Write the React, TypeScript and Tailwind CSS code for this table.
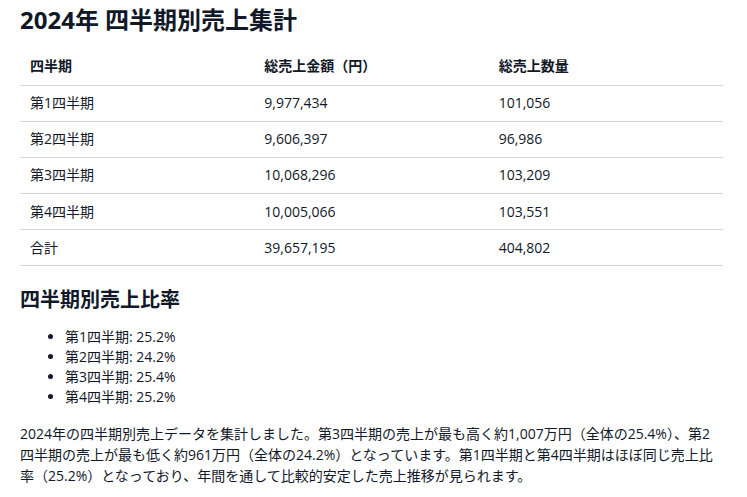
import React from "react";

const rows = [
  { q: "第1四半期", amount: "9,977,434", qty: "101,056" },
  { q: "第2四半期", amount: "9,606,397", qty: "96,986" },
  { q: "第3四半期", amount: "10,068,296", qty: "103,209" },
  { q: "第4四半期", amount: "10,005,066", qty: "103,551" },
  { q: "合計", amount: "39,657,195", qty: "404,802" },
];

const ratios = [
  { q: "第1四半期", pct: "25.2%" },
  { q: "第2四半期", pct: "24.2%" },
  { q: "第3四半期", pct: "25.4%" },
  { q: "第4四半期", pct: "25.2%" },
];

export default function App() {
  return (
    <div
      className="min-h-screen bg-white pl-5 pr-6 text-[#111827]"
      style={{ fontFamily: '"Open Sans", "Noto Sans CJK JP", sans-serif' }}
    >
      <h1 className="pt-1 text-2xl font-bold leading-8">2024年 四半期別売上集計</h1>

      <table className="mt-[11px] w-full border-collapse text-sm">
        <thead>
          <tr className="h-[38px] border-b border-[#d1d5db]">
            <th className="w-1/3 px-[10px] py-0 text-left font-bold leading-5">四半期</th>
            <th className="w-1/3 px-[10px] py-0 text-left font-bold leading-5">総売上金額（円）</th>
            <th className="w-1/3 px-[10px] py-0 text-left font-bold leading-5">総売上数量</th>
          </tr>
        </thead>
        <tbody>
          {rows.map((r) => (
            <tr key={r.q} className="h-[36.2px] border-b border-[#d1d5db]">
              <td className="px-[10px] py-0 leading-5">{r.q}</td>
              <td className="px-[10px] py-0 leading-5">{r.amount}</td>
              <td className="px-[10px] py-0 leading-5">{r.qty}</td>
            </tr>
          ))}
        </tbody>
      </table>

      <h2 className="mt-5 text-xl font-bold leading-7">四半期別売上比率</h2>

      <ul className="mt-[13px] list-disc pl-[45px] text-sm leading-5">
        {ratios.map((r) => (
          <li key={r.q}>
            {r.q}: {r.pct}
          </li>
        ))}
      </ul>

      <p className="mt-4 text-sm leading-[21px]">
        2024年の四半期別売上データを集計しました。第3四半期の売上が最も高く約1,007万円（全体の25.4%）、第2四半期の売上が最も低く約961万円（全体の24.2%）となっています。第1四半期と第4四半期はほぼ同じ売上比率（25.2%）となっており、年間を通して比較的安定した売上推移が見られます。
      </p>
    </div>
  );
}
